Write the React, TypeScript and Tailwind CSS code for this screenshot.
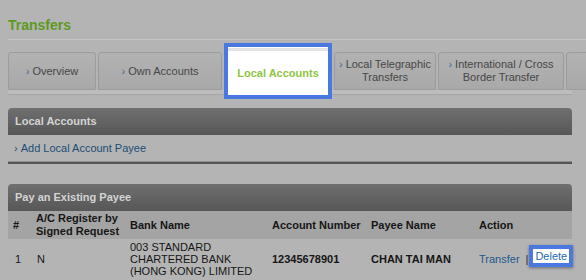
const font = { fontFamily: '"Liberation Sans", Arial, sans-serif' };

const tabs = [
  { label: ['Overview'], width: 'w-[88px]' },
  { label: ['Own Accounts'], width: 'w-[124px]' },
  { label: ['Local Accounts'], width: 'w-[108px]', active: true },
  { label: ['Local Telegraphic', 'Transfers'], width: 'w-[102px]' },
  { label: ['International / Cross', 'Border Transfer'], width: 'w-[126px]' },
  { label: [''], width: 'w-[40px]' },
];

function Chevron() {
  return <span className="text-[#3b6a92] mr-[3px]">›</span>;
}

function Tab({ tab }: { tab: (typeof tabs)[number] }) {
  if (tab.active) {
    return (
      <div className={`${tab.width} h-[56px] shrink-0 border-[4px] border-[#4a78e0] bg-white flex flex-col`}>
        <div className="h-[3px] mt-[1px] bg-[#e4e4e4]" />
        <div className="flex-1 flex items-center justify-center font-bold text-[#8dc63f]">Local Accounts</div>
      </div>
    );
  }
  return (
    <div
      className={`${tab.width} h-[38px] shrink-0 rounded-t-[3px] border border-[#9c9c9c] bg-gradient-to-b from-[#b2b2b2] to-[#a9a9a9] flex flex-col items-center justify-center text-[#474747] leading-[13px] text-center`}
    >
      {tab.label[0] && (
        <div>
          <Chevron />
          {tab.label[0]}
        </div>
      )}
      {tab.label[1] && <div>{tab.label[1]}</div>}
    </div>
  );
}

function PanelHeader({ title }: { title: string }) {
  return (
    <div className="h-[27px] rounded-t-[4px] bg-gradient-to-b from-[#6f6f6f] to-[#575757] flex items-center pl-[7px] font-bold text-[#d4d4d4]">
      {title}
    </div>
  );
}

const cols = 'grid grid-cols-[23px_94px_142px_99px_108px_98px]';

export default function App() {
  return (
    <div style={font} className="w-[586px] h-[280px] overflow-hidden bg-[#b4b4b4] text-[11px] text-[#161616]">
      <div className="pl-[8px] pt-[16px]">
        <h1 className="text-[14px] font-bold text-[#5e9a1e] leading-[18px] h-[23px]">Transfers</h1>
        <div className="h-[1px] bg-[#9a9a9a] border-b border-[#c4c4c4]" />

        <div className="mt-[12px] h-[38px] flex items-center gap-[2px]">
          {tabs.map((t, i) => (
            <Tab key={i} tab={t} />
          ))}
        </div>
        <div className="h-[5px] bg-[#bdbdbd] border-b border-[#a6a6a6] mr-[14px]" />

        <div className="w-[564px] mt-[13px]">
          <PanelHeader title="Local Accounts" />
          <div className="h-[26px] flex items-center pl-[6px] text-[#1d4d76]">
            <span className="mr-[3px]">›</span>Add Local Account Payee
          </div>
          <div className="h-[1px] bg-[#8e8e8e]" />
          <div className="h-[2px] bg-[#555555]" />

          <div className="mt-[20px]">
            <PanelHeader title="Pay an Existing Payee" />
            <div className={`${cols} h-[28px] bg-[#a4a4a4] font-bold leading-[13px] items-center`}>
              <div className="pl-[5px]">#</div>
              <div className="pl-[5px]">
                A/C Register by
                <br />
                Signed Request
              </div>
              <div className="pl-[5px]">Bank Name</div>
              <div className="pl-[5px]">Account Number</div>
              <div className="pl-[5px]">Payee Name</div>
              <div className="pl-[5px]">Action</div>
            </div>
            <div className={`${cols} items-center pt-[2px] leading-[12px]`}>
              <div className="pl-[7px]">1</div>
              <div className="pl-[6px]">N</div>
              <div className="pl-[5px]">
                003 STANDARD
                <br />
                CHARTERED BANK
                <br />
                (HONG KONG) LIMITED
              </div>
              <div className="pl-[5px] font-bold">12345678901</div>
              <div className="pl-[5px] font-bold">CHAN TAI MAN</div>
              <div className="pl-[5px] flex items-center text-[#1d5a8c]">
                <span>Transfer</span>
                <span className="ml-[6px] mr-[1px] text-[#333]">|</span>
                <span className="mb-[6px] border-[4px] border-[#4a78e0] bg-white px-[2px] h-[22px] flex items-center text-[#1f6bb0] shadow-[0_1px_3px_rgba(0,0,0,0.4)]">
                  Delete
                </span>
              </div>
            </div>
          </div>
        </div>
      </div>
    </div>
  );
}
